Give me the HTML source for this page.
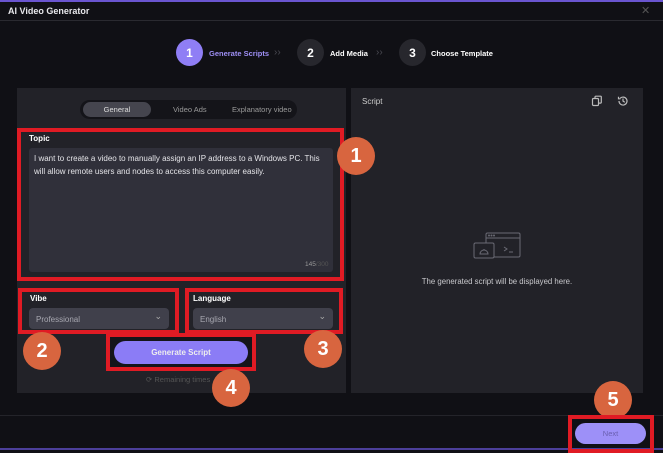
<!DOCTYPE html>
<html><head><meta charset="utf-8"><style>
*{margin:0;padding:0;box-sizing:border-box}
body{width:663px;height:450px;background:#101015;font-family:"Liberation Sans",sans-serif;position:relative;overflow:hidden;color:#fff}
.a{position:absolute}
.circ{position:absolute;border-radius:50%;display:flex;align-items:center;justify-content:center;font-weight:bold}
.step{width:27px;height:27px;font-size:12px;background:#27272d;color:#fff}
.lbl{position:absolute;font-size:7.5px;font-weight:bold;top:49px}
.red{position:absolute;border:4px solid #e01b24}
.num{width:38px;height:38px;background:#d8653f;color:#fff;font-size:20px}
.sel{position:absolute;background:#40404b;border-radius:4px;height:21px;font-size:8px;color:#a7a7b0;padding:7px 0 0 7px}
.sel:after{content:"⌄";position:absolute;right:7px;top:3px;font-size:9px;color:#aaa}
</style></head><body>
<div class="a" style="left:0;top:0;width:663px;height:2px;background:#6a55d0"></div>
<div class="a" style="left:0;top:448px;width:663px;height:2px;background:#4c3f9a"></div>
<div class="a" style="left:8px;top:6px;font-size:9px;font-weight:bold;color:#e8e8ec">AI Video Generator</div>
<div class="a" style="left:641px;top:4px;font-size:11px;color:#555">✕</div>
<div class="a" style="left:0;top:20px;width:663px;height:1px;background:#2a2a30"></div>

<div class="circ step" style="left:176px;top:39px;background:#8f7ef5">1</div>
<div class="lbl" style="left:209px;color:#9e8ff5">Generate Scripts</div>
<div class="lbl" style="left:274px;top:47px;color:#4a4a52;font-weight:normal;font-size:10px">››</div>
<div class="circ step" style="left:297px;top:39px">2</div>
<div class="lbl" style="left:330px">Add Media</div>
<div class="lbl" style="left:376px;top:47px;color:#4a4a52;font-weight:normal;font-size:10px">››</div>
<div class="circ step" style="left:399px;top:39px">3</div>
<div class="lbl" style="left:431px">Choose Template</div>

<div class="a" style="left:17px;top:88px;width:329px;height:305px;background:#222228"></div>
<div class="a" style="left:351px;top:88px;width:292px;height:305px;background:#222228"></div>
<div class="a" style="left:0;top:415px;width:663px;height:1px;background:#24242a"></div>

<div class="a" style="left:80px;top:100px;width:217px;height:19px;background:#141419;border-radius:10px"></div>
<div class="a" style="left:83px;top:102px;width:68px;height:15px;background:#45454e;border-radius:8px;font-size:7.5px;color:#ddd;text-align:center;line-height:15px">General</div>
<div class="a" style="left:173px;top:105px;font-size:7.5px;color:#999">Video Ads</div>
<div class="a" style="left:232px;top:105px;font-size:7.5px;color:#999">Explanatory video</div>

<div class="red" style="left:17px;top:128px;width:327px;height:153px"></div>
<div class="a" style="left:29px;top:134px;font-size:8px;font-weight:bold">Topic</div>
<div class="a" style="left:29px;top:148px;width:304px;height:124px;background:#30303a;border-radius:3px"></div>
<div class="a" style="left:34px;top:153px;width:292px;font-size:8px;line-height:12.5px;color:#e4e4e8">I want to create a video to manually assign an IP address to a Windows PC. This will allow remote users and nodes to access this computer easily.</div>
<div class="a" style="left:305px;top:261px;font-size:6.5px;color:#999">145<span style="color:#555">/300</span></div>

<div class="red" style="left:18px;top:288px;width:161px;height:46px"></div>
<div class="a" style="left:30px;top:294px;font-size:8px;font-weight:bold">Vibe</div>
<div class="sel" style="left:29px;top:308px;width:140px">Professional</div>
<div class="red" style="left:185px;top:288px;width:158px;height:46px"></div>
<div class="a" style="left:193px;top:294px;font-size:8px;font-weight:bold">Language</div>
<div class="sel" style="left:193px;top:308px;width:140px">English</div>

<div class="red" style="left:106px;top:333px;width:150px;height:38px;background:#15151a"></div>
<div class="a" style="left:114px;top:341px;width:134px;height:23px;background:#8b7cf6;border-radius:12px;font-size:8px;font-weight:bold;text-align:center;line-height:23px;color:#eee">Generate Script</div>
<div class="a" style="left:146px;top:375px;font-size:7.5px;color:#555">⟳ Remaining times</div>

<div class="circ num" style="left:337px;top:137px">1</div>
<div class="circ num" style="left:23px;top:332px">2</div>
<div class="circ num" style="left:304px;top:330px">3</div>
<div class="circ num" style="left:212px;top:369px">4</div>
<div class="circ num" style="left:594px;top:381px">5</div>

<div class="a" style="left:362px;top:97px;font-size:8px;color:#ccc">Script</div>
<svg class="a" style="left:591px;top:95px" width="12" height="12" viewBox="0 0 12 12" fill="none" stroke="#bbb" stroke-width="1.2"><rect x="1.5" y="3.5" width="6" height="7" rx="1"/><path d="M4 3.5V2a.8.8 0 0 1 .8-.8h4.7a.8.8 0 0 1 .8.8v5.3a.8.8 0 0 1-.8.8H7.5"/></svg>
<svg class="a" style="left:617px;top:95px" width="12" height="12" viewBox="0 0 12 12" fill="none" stroke="#bbb" stroke-width="1.2"><path d="M2 6a4 4 0 1 0 1.2-2.8"/><path d="M1.5 1.8v2h2"/><path d="M6 3.5V6l1.8 1.2"/></svg>
<svg class="a" style="left:472px;top:231px" width="52" height="34" viewBox="0 0 52 34" fill="none" stroke="#6a6a74" stroke-width="1"><rect x="14" y="2" width="34" height="24" rx="1.5"/><path d="M14 7h34"/><circle cx="17" cy="4.5" r=".5"/><circle cx="19.5" cy="4.5" r=".5"/><circle cx="22" cy="4.5" r=".5"/><path d="M32 16l3 2-3 2M37 21h4"/><rect x="2" y="12" width="20" height="15" rx="1.5" fill="#222228"/><path d="M8 23a4 4 0 0 1 8 0zM12 19v-1"/></svg>
<div class="a" style="left:351px;top:277px;width:292px;text-align:center;font-size:7.8px;color:#c8c8cc">The generated script will be displayed here.</div>

<div class="red" style="left:568px;top:415px;width:86px;height:38px"></div>
<div class="a" style="left:575px;top:423px;width:71px;height:21px;background:#9d90f8;border-radius:11px;font-size:7.5px;color:#6a5fb0;text-align:center;line-height:21px">Next</div>
</body></html>
